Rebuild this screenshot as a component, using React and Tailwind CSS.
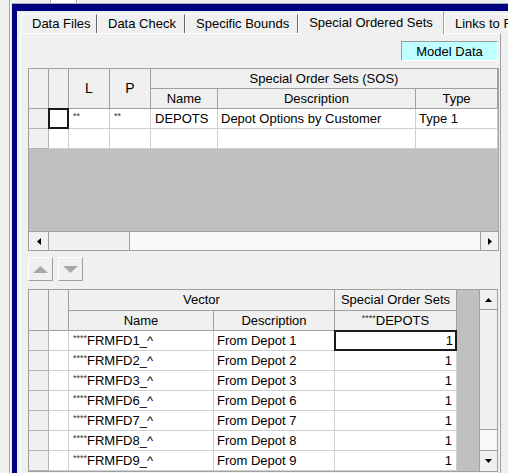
import React from 'react';

const HDR = 'bg-[#f0f0f0] border-r border-b border-[#a0a0a0] flex items-center justify-center whitespace-nowrap overflow-hidden';
const CELL = 'bg-white border-r border-b border-[#cfcfcf] h-[20px] leading-[19px] whitespace-nowrap';
const ROWHEAD = 'bg-[#f0f0f0] border-r border-b border-[#b4b4b4] h-[20px]';
const TOP_COLS = 'grid grid-cols-[20px_20px_41px_41px_67px_198px_82px]';
const BOT_COLS = 'grid grid-cols-[20px_20px_145px_121px_122px]';

const vectors = [
  ['FRMFD1_^', 'From Depot 1'],
  ['FRMFD2_^', 'From Depot 2'],
  ['FRMFD3_^', 'From Depot 3'],
  ['FRMFD6_^', 'From Depot 6'],
  ['FRMFD7_^', 'From Depot 7'],
  ['FRMFD8_^', 'From Depot 8'],
  ['FRMFD9_^', 'From Depot 9'],
];

function Tri({ dir, w, h, color = '#000' }) {
  const pts = {
    left: `${w},0 0,${h / 2} ${w},${h}`,
    right: `0,0 ${w},${h / 2} 0,${h}`,
    up: `0,${h} ${w / 2},0 ${w},${h}`,
    down: `0,0 ${w},0 ${w / 2},${h}`,
  }[dir];
  return (
    <svg width={w} height={h} viewBox={`0 0 ${w} ${h}`}>
      <polygon points={pts} fill={color} />
    </svg>
  );
}

function Stars({ n }) {
  return <span className="text-[9px] leading-none mt-[3px] text-[#333]">{'*'.repeat(n)}</span>;
}

function Tab({ label, w, selected }) {
  if (selected) {
    return (
      <div className={`relative z-10 -mb-px h-[23px] bg-[#f0f0f0] border-l border-t border-white border-r border-r-[#a0a0a0] flex items-center justify-center pb-[1px] shrink-0 ${w}`}>
        {label}
      </div>
    );
  }
  return (
    <div className={`h-[19px] bg-[#f0f0f0] border-l border-t border-white border-r border-r-[#696969] flex items-center pl-[10px] shrink-0 whitespace-nowrap overflow-hidden ${w}`}>
      {label}
    </div>
  );
}

function TopGrid() {
  return (
    <div className="mt-[7px] w-[471px] border border-[#a0a0a0] bg-[#c0c0c0]">
      {/* header */}
      <div className={`${TOP_COLS} grid-rows-[20px_20px]`}>
        <div className={`${HDR} row-span-2`} />
        <div className={`${HDR} row-span-2`} />
        <div className={`${HDR} row-span-2 text-[14px]`}>L</div>
        <div className={`${HDR} row-span-2 text-[14px]`}>P</div>
        <div className={`${HDR} col-span-3`}>Special Order Sets (SOS)</div>
        <div className={HDR}>Name</div>
        <div className={HDR}>Description</div>
        <div className={HDR}>Type</div>
      </div>
      {/* rows */}
      <div className={TOP_COLS}>
        <div className={ROWHEAD} />
        <div className={`${CELL} relative`}>
          <div className="absolute -left-px -top-px w-[21px] h-[21px] border-2 border-[#1a1a1a] bg-white" />
        </div>
        <div className={`${CELL} flex pl-[4px]`}><Stars n={2} /></div>
        <div className={`${CELL} flex pl-[4px]`}><Stars n={2} /></div>
        <div className={`${CELL} pl-[4px]`}>DEPOTS</div>
        <div className={`${CELL} pl-[3px]`}>Depot Options by Customer</div>
        <div className={`${CELL} pl-[3px]`}>Type 1</div>

        <div className={ROWHEAD} />
        <div className={CELL} />
        <div className={CELL} />
        <div className={CELL} />
        <div className={CELL} />
        <div className={CELL} />
        <div className={CELL} />
      </div>
      <div className="h-[82px]" />
      {/* horizontal scrollbar */}
      <div className="h-[19px] flex border-t border-[#a0a0a0] bg-[#f8f8f8]">
        <div className="w-[20px] bg-[#f0f0f0] border-r border-[#a0a0a0] flex items-center justify-center">
          <Tri dir="left" w={4} h={7} />
        </div>
        <div className="w-[81px] bg-[#f0f0f0] border-r border-[#a0a0a0]" />
        <div className="flex-1" />
        <div className="w-[18px] bg-[#f0f0f0] border-l border-[#a0a0a0] flex items-center justify-center">
          <Tri dir="right" w={4} h={7} />
        </div>
      </div>
    </div>
  );
}

function BottomGrid() {
  return (
    <div className="mt-[8px] w-[470px] border border-[#a0a0a0] flex">
      <div className="w-[428px]">
        <div className={`${BOT_COLS} grid-rows-[21px_20px]`}>
          <div className={`${HDR} row-span-2`} />
          <div className={`${HDR} row-span-2`} />
          <div className={`${HDR} col-span-2`}>Vector</div>
          <div className={HDR}>Special Order Sets</div>
          <div className={HDR}>Name</div>
          <div className={HDR}>Description</div>
          <div className={`${HDR} items-start`}>
            <Stars n={4} />
            <span className="leading-[19px]">DEPOTS</span>
          </div>
        </div>
        <div className={BOT_COLS}>
          {vectors.map(([name, desc], i) => (
            <React.Fragment key={name}>
              <div className={ROWHEAD} />
              <div className={CELL} />
              <div className={`${CELL} flex pl-[4px] overflow-hidden`}>
                <Stars n={4} />
                <span>{name}</span>
              </div>
              <div className={`${CELL} pl-[3px] overflow-hidden`}>{desc}</div>
              <div className={`${CELL} relative`}>
                {i === 0 ? (
                  <div className="absolute -left-px -top-px w-[123px] h-[21px] border-2 border-[#1a1a1a] text-right pr-[2px] leading-[17px]">1</div>
                ) : (
                  <div className="text-right pr-[4px]">1</div>
                )}
              </div>
            </React.Fragment>
          ))}
        </div>
      </div>
      <div className="w-[22px] bg-[#c0c0c0]" />
      {/* vertical scrollbar */}
      <div className="w-[18px] flex flex-col border-l border-[#a0a0a0] bg-[#f8f8f8]">
        <div className="h-[20px] bg-[#f0f0f0] border-b border-[#a0a0a0] flex items-center justify-center">
          <Tri dir="up" w={7} h={4} />
        </div>
        <div className="h-[120px] bg-[#f0f0f0] border-b border-[#a0a0a0]" />
        <div className="h-[20px]" />
        <div className="flex-1 bg-[#f0f0f0] border-t border-[#a0a0a0] flex items-center justify-center">
          <Tri dir="down" w={7} h={4} />
        </div>
      </div>
    </div>
  );
}

export default function App() {
  return (
    <div className="w-[508px] h-[473px] overflow-hidden bg-[#f0f0f0] flex text-[13px] text-black font-['Liberation_Sans',Arial,sans-serif]">
      {/* left edge */}
      <div className="w-[12px] shrink-0 flex">
        <div className="w-[10px] h-full border-r border-[#a9a9a9]" />
      </div>

      <div className="flex-1 flex flex-col min-w-0">
        <div className="h-[4px] shrink-0 border-b border-[#a9a9a9] flex">
          <div className="ml-[38px] w-[27px] h-[3px] border-l border-r border-[#b0b0b0] bg-white" />
        </div>

        {/* navy framed window */}
        <div className="flex-1 border-l-[5px] border-t-[7px] border-[#000080] bg-[#f0f0f0] flex flex-col">
          {/* tabs */}
          <div className="h-[22px] shrink-0 flex items-end pl-[4px]">
            <Tab label="Data Files" w="w-[76px]" />
            <Tab label="Data Check" w="w-[88px]" />
            <Tab label="Specific Bounds" w="w-[113px]" />
            <Tab label="Special Ordered Sets" w="w-[146px]" selected />
            <Tab label="Links to F" w="w-[70px]" />
          </div>

          {/* tab panel */}
          <div className="ml-[3px] w-[481px] flex-1 border-l border-t border-white border-r border-r-[#a0a0a0] pl-[7px] pt-[7px] flex flex-col">
            <div className="w-[471px] flex flex-col">
              <div className="self-end mr-[1px] w-[97px] h-[20px] bg-[#bfffff] border-t border-l border-[#9a9a9a] border-b border-r border-b-white border-r-white flex items-center justify-center leading-none">
                Model Data
              </div>

              <TopGrid />

              <div className="mt-[6px] flex gap-[5px]">
                <div className="w-[25px] h-[24px] bg-[#f0f0f0] border-t border-l border-white border-b border-r border-b-[#a0a0a0] border-r-[#a0a0a0] flex items-center justify-center">
                  <Tri dir="up" w={15} h={7} color="#a8a8a8" />
                </div>
                <div className="w-[25px] h-[24px] bg-[#f0f0f0] border-t border-l border-white border-b border-r border-b-[#a0a0a0] border-r-[#a0a0a0] flex items-center justify-center">
                  <Tri dir="down" w={15} h={7} color="#a8a8a8" />
                </div>
              </div>

              <BottomGrid />
            </div>
          </div>
        </div>
      </div>
    </div>
  );
}
